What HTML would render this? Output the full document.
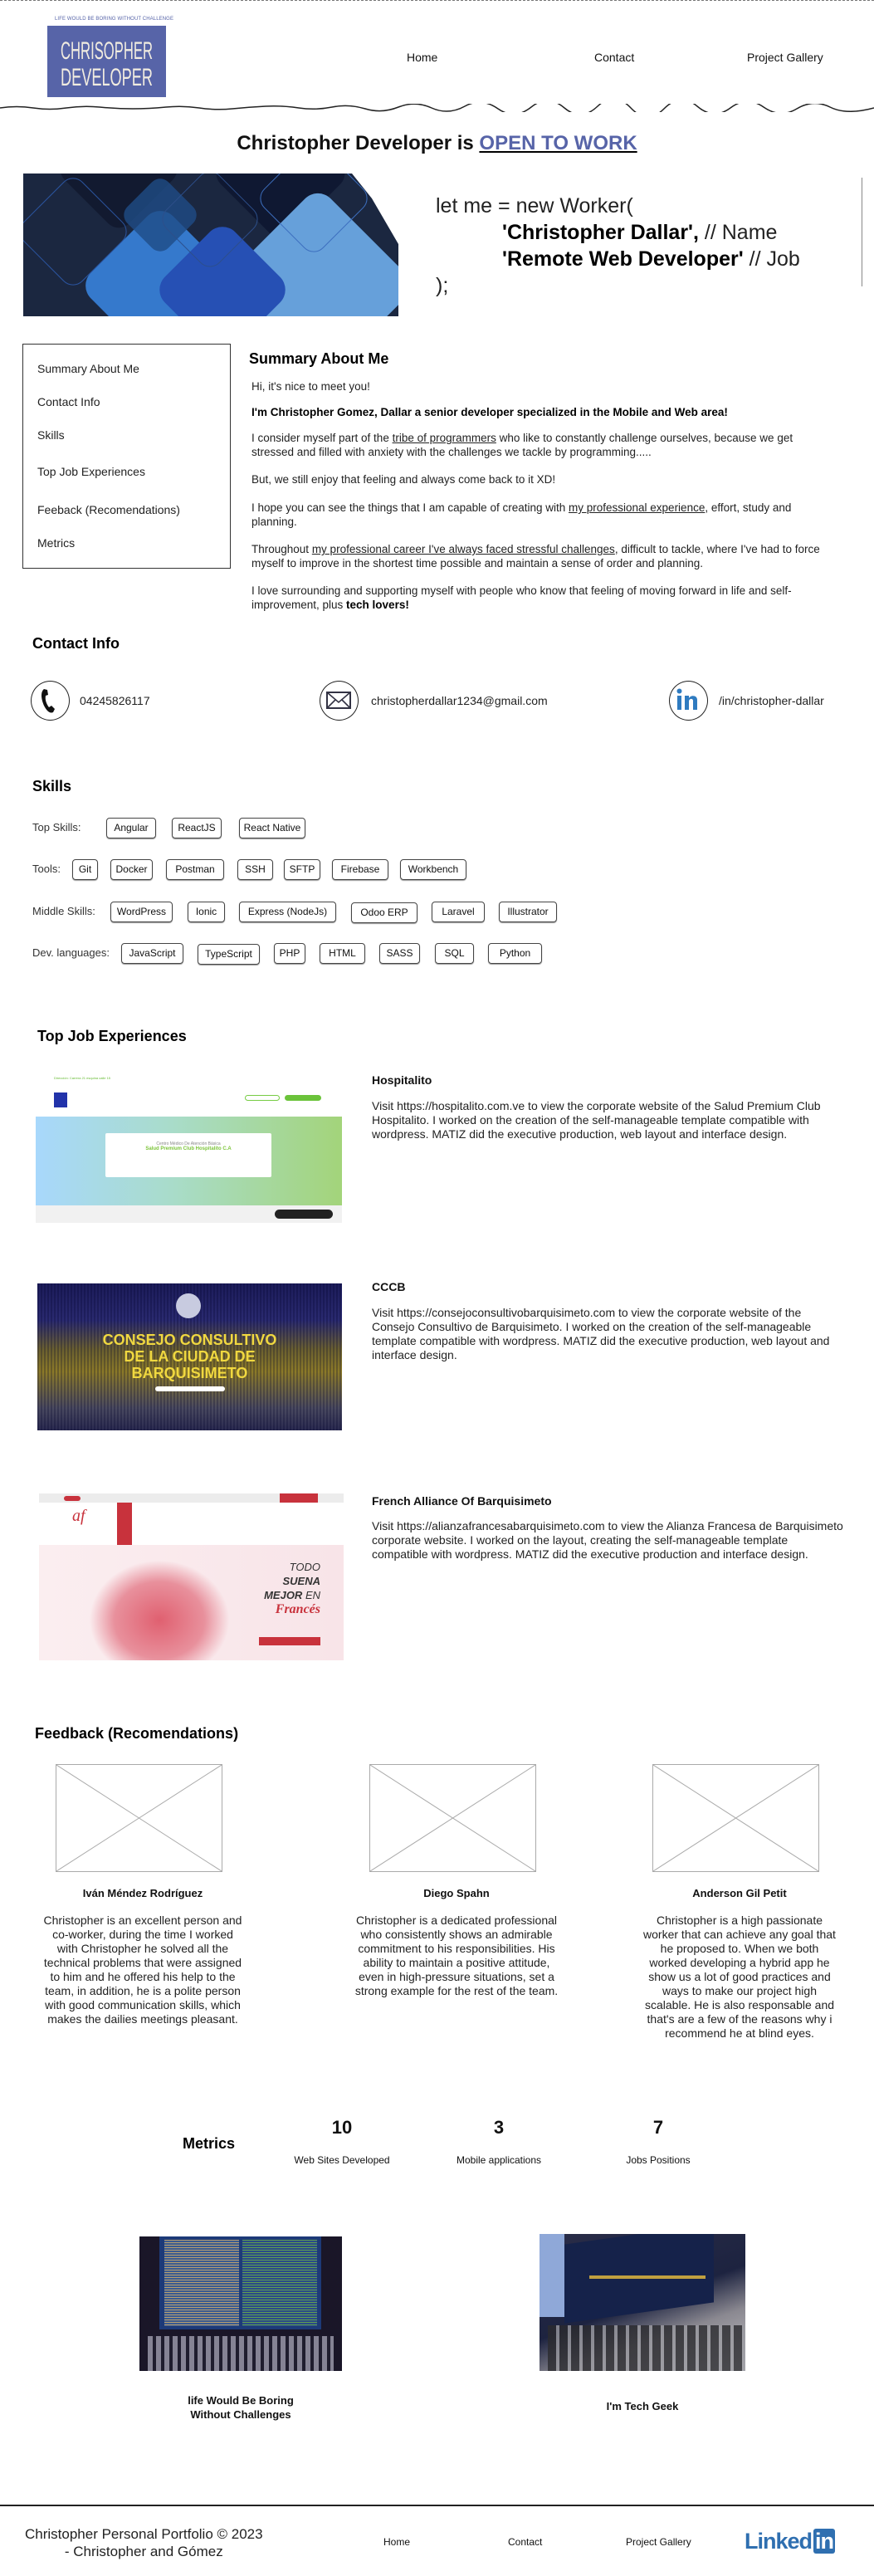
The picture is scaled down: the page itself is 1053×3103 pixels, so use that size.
<!DOCTYPE html>
<html><head><meta charset="utf-8">
<style>
*{margin:0;padding:0;box-sizing:border-box}
body{width:1053px;height:3103px;position:relative;background:#fff;font-family:"Liberation Sans",Arial,sans-serif;color:#111;overflow:hidden}
.a{position:absolute}
.nav{font-size:14px;color:#111}
h2{position:absolute;font-size:18px;font-weight:bold;color:#000}
.p{font-size:13.5px;line-height:17px;color:#222}
.chip{position:absolute;height:25px;border:1.5px solid #444;border-radius:4px;font-size:12px;line-height:22px;text-align:center;box-shadow:0 1px 1px #999;color:#111}
.lab{position:absolute;font-size:13px;color:#333}
.side{position:absolute;left:45px;font-size:14px;color:#222}
.icon{position:absolute;width:47px;height:48px;border:1.5px solid #222;border-radius:50%;top:820px}
.ctext{position:absolute;top:836px;font-size:14px;color:#222}
.jt{position:absolute;left:448px;font-size:14px;font-weight:bold}
.jp{position:absolute;left:448px;width:570px;font-size:14px;line-height:17px;color:#222}
.fb{position:absolute;width:201px;height:130px;border:1.5px solid #aaa;top:2125px}
.fn{position:absolute;width:260px;text-align:center;font-size:13px;font-weight:bold;top:2273px}
.ft{position:absolute;width:246px;text-align:center;font-size:14px;line-height:17px;top:2305px;color:#222}
.u{text-decoration:underline}
</style></head><body>
<div class="a" style="left:0;top:0;width:1053px;height:1px;border-top:1px dashed #777"></div>

<div class="a" style="left:66px;top:20px;font-size:6px;color:#5764a8;letter-spacing:0.1px">LIFE WOULD BE BORING WITHOUT CHALLENGE</div>
<svg class="a" style="left:57px;top:31px" width="143" height="86"><rect width="143" height="86" fill="#5764a8"/>
<text x="16" y="40" font-family="Liberation Sans, sans-serif" font-size="30" fill="#f1ece0" textLength="111" lengthAdjust="spacingAndGlyphs">CHRISOPHER</text>
<text x="16" y="72" font-family="Liberation Sans, sans-serif" font-size="30" fill="#f1ece0" textLength="111" lengthAdjust="spacingAndGlyphs">DEVELOPER</text></svg>
<div class="a nav" style="left:490px;top:61px">Home</div>
<div class="a nav" style="left:716px;top:61px">Contact</div>
<div class="a nav" style="left:900px;top:61px">Project Gallery</div>
<svg class="a" style="left:0;top:125px" width="1053" height="10"><path d="M0 5 Q20 2 40 5 T80 5 T120 4 T160 6 T200 4 T240 5 T280 6 T320 3 T360 5 T400 4 T440 6 T480 4 T520 5 T560 3 T600 6 T640 4 T680 5 T720 3 T760 5 T800 6 T840 3 T880 5 T920 4 T960 6 T1000 4 T1053 5" stroke="#222" stroke-width="1.5" fill="none"/></svg>

<div class="a" style="left:0;width:1053px;top:159px;text-align:center;font-size:24px;font-weight:bold">Christopher Developer is <span style="color:#5764a8;text-decoration:underline;text-decoration-color:#000">OPEN TO WORK</span></div>

<svg class="a" style="left:28px;top:209px" width="452" height="172" viewBox="0 0 452 172">
<defs><clipPath id="c"><rect width="452" height="172"/></clipPath></defs>
<g clip-path="url(#c)">
<rect width="452" height="172" fill="#1b2740"/>
<rect x="60" y="-60" width="110" height="110" rx="18" fill="#121a30" transform="rotate(45 115 -5)"/>
<rect x="250" y="-60" width="120" height="120" rx="18" fill="#0f1832" transform="rotate(45 310 0)"/>
<rect x="95" y="65" width="140" height="140" rx="22" fill="#3579cc" transform="rotate(45 165 135)"/>
<rect x="270" y="50" width="170" height="170" rx="22" fill="#66a0da" transform="rotate(45 355 135)"/>
<rect x="180" y="80" width="120" height="120" rx="22" fill="#2650b4" transform="rotate(45 240 140)"/>
<rect x="130" y="15" width="70" height="70" rx="14" fill="#1f4c86" opacity="0.8" transform="rotate(45 165 50)"/>
<polygon points="396,0 452,0 452,85 420,30" fill="#fff"/>
<rect x="10" y="20" width="100" height="100" rx="16" fill="none" stroke="#2b55a0" stroke-width="1" transform="rotate(45 60 70)"/>
<rect x="300" y="-20" width="100" height="100" rx="16" fill="none" stroke="#3d6fbf" stroke-width="1" transform="rotate(45 350 30)"/>
<rect x="180" y="10" width="90" height="90" rx="16" fill="none" stroke="#2d4f8a" stroke-width="1" transform="rotate(45 225 55)"/>
</g></svg>
<div class="a" style="left:525px;top:232px;font-size:25px;line-height:32px;color:#222">let me = new Worker(<br>
<span style="padding-left:80px;font-weight:bold;color:#000">'Christopher Dallar',</span> // Name<br>
<span style="padding-left:80px;font-weight:bold;color:#000">'Remote Web Developer'</span> // Job<br>);</div>
<div class="a" style="left:1038px;top:214px;width:1px;height:131px;background:#888"></div>

<div class="a" style="left:27px;top:414px;width:251px;height:271px;border:1.5px solid #333"></div>
<div class="side" style="top:436px">Summary About Me</div>
<div class="side" style="top:476px">Contact Info</div>
<div class="side" style="top:516px">Skills</div>
<div class="side" style="top:560px">Top Job Experiences</div>
<div class="side" style="top:606px">Feeback (Recomendations)</div>
<div class="side" style="top:646px">Metrics</div>

<h2 style="left:300px;top:422px">Summary About Me</h2>
<div class="a p" style="left:303px;top:457px;width:700px">Hi, it's nice to meet you!</div>
<div class="a p" style="left:303px;top:488px;width:720px;font-weight:bold;color:#000">I'm Christopher Gomez, Dallar a senior developer specialized in the Mobile and Web area!</div>
<div class="a p" style="left:303px;top:519px;width:690px">I consider myself part of the <span class="u">tribe of programmers</span> who like to constantly challenge ourselves, because we get stressed and filled with anxiety with the challenges we tackle by programming.....</div>
<div class="a p" style="left:303px;top:569px;width:690px">But, we still enjoy that feeling and always come back to it XD!</div>
<div class="a p" style="left:303px;top:603px;width:690px">I hope you can see the things that I am capable of creating with <span class="u">my professional experience</span>, effort, study and planning.</div>
<div class="a p" style="left:303px;top:653px;width:690px">Throughout <span class="u">my professional career I've always faced stressful challenges</span>, difficult to tackle, where I've had to force myself to improve in the shortest time possible and maintain a sense of order and planning.</div>
<div class="a p" style="left:303px;top:703px;width:700px">I love surrounding and supporting myself with people who know that feeling of moving forward in life and self-improvement, plus <b style="color:#000">tech lovers!</b></div>

<h2 style="left:39px;top:765px">Contact Info</h2>
<div class="icon" style="left:37px"><svg width="44" height="45" viewBox="0 0 44 45"><path d="M15 9 C11 12 11 20 15 29 C18 35 22 39 26 37 L28 33 L24 29 L21 31 C18 27 16 22 17 17 L20 16 L19 10 Z" fill="#111"/></svg></div>
<div class="ctext" style="left:96px">04245826117</div>
<div class="icon" style="left:385px"><svg width="44" height="45" viewBox="0 0 44 45"><rect x="8" y="13" width="28" height="19" fill="none" stroke="#334" stroke-width="2"/><path d="M8 13 L22 25 L36 13 M8 32 L18 22 M36 32 L26 22" stroke="#334" stroke-width="1.6" fill="none"/></svg></div>
<div class="ctext" style="left:447px">christopherdallar1234@gmail.com</div>
<div class="icon" style="left:806px"><svg width="44" height="45" viewBox="0 0 44 45"><rect x="9" y="17" width="5" height="17" fill="#2f7bc0"/><circle cx="11.5" cy="11.5" r="3" fill="#2f7bc0"/><path d="M18 17 H23 V20 C25 16 33 16 33 22 V34 H28 V23 C28 20 23 20 23 24 V34 H18 Z" fill="#2f7bc0"/></svg></div>
<div class="ctext" style="left:866px">/in/christopher-dallar</div>

<h2 style="left:39px;top:937px">Skills</h2>
<div class="lab" style="left:39px;top:989px">Top Skills:</div>
<div class="chip" style="left:128px;top:985px;width:60px">Angular</div>
<div class="chip" style="left:207px;top:985px;width:60px">ReactJS</div>
<div class="chip" style="left:288px;top:985px;width:80px">React Native</div>
<div class="lab" style="left:39px;top:1039px">Tools:</div>
<div class="chip" style="left:87px;top:1035px;width:31px">Git</div>
<div class="chip" style="left:133px;top:1035px;width:51px">Docker</div>
<div class="chip" style="left:200px;top:1035px;width:70px">Postman</div>
<div class="chip" style="left:286px;top:1035px;width:43px">SSH</div>
<div class="chip" style="left:342px;top:1035px;width:44px">SFTP</div>
<div class="chip" style="left:400px;top:1035px;width:68px">Firebase</div>
<div class="chip" style="left:482px;top:1035px;width:80px">Workbench</div>
<div class="lab" style="left:39px;top:1090px">Middle Skills:</div>
<div class="chip" style="left:133px;top:1086px;width:75px">WordPress</div>
<div class="chip" style="left:226px;top:1086px;width:45px">Ionic</div>
<div class="chip" style="left:288px;top:1086px;width:117px">Express (NodeJs)</div>
<div class="chip" style="left:423px;top:1087px;width:80px">Odoo ERP</div>
<div class="chip" style="left:520px;top:1086px;width:64px">Laravel</div>
<div class="chip" style="left:601px;top:1086px;width:70px">Illustrator</div>
<div class="lab" style="left:39px;top:1140px">Dev. languages:</div>
<div class="chip" style="left:146px;top:1136px;width:75px">JavaScript</div>
<div class="chip" style="left:238px;top:1137px;width:75px">TypeScript</div>
<div class="chip" style="left:330px;top:1136px;width:38px">PHP</div>
<div class="chip" style="left:385px;top:1136px;width:55px">HTML</div>
<div class="chip" style="left:457px;top:1136px;width:49px">SASS</div>
<div class="chip" style="left:524px;top:1136px;width:47px">SQL</div>
<div class="chip" style="left:588px;top:1136px;width:65px">Python</div>

<h2 style="left:45px;top:1238px">Top Job Experiences</h2>

<div class="a" style="left:43px;top:1292px;width:369px;height:181px;background:#fff;overflow:hidden">
<div class="a" style="left:22px;top:4px;font-size:4px;color:#6b3">Dirección: Carrera 21 esquina calle 15</div>
<div class="a" style="left:22px;top:24px;width:16px;height:18px;background:#2233aa"></div>
<div class="a" style="left:252px;top:27px;width:42px;height:7px;border-radius:4px;border:1px solid #7c4"></div>
<div class="a" style="left:300px;top:27px;width:44px;height:7px;border-radius:4px;background:#6bc33a"></div>
<div class="a" style="left:0;top:53px;width:369px;height:107px;background:linear-gradient(90deg,#a8d8fc,#a9dcc9 45%,#a3d47a)"></div>
<div class="a" style="left:84px;top:73px;height:53px;background:#fff;border-radius:2px;width:200px;text-align:center;font-size:5px;color:#888;padding-top:10px">Centro Médico De Atención Básica<br><b style="color:#7cc43a;font-size:6px">Salud Premium Club Hospitalito C.A</b></div>
<div class="a" style="left:0;top:160px;width:369px;height:21px;background:#f1f1f1"></div>
<div class="a" style="left:288px;top:165px;width:70px;height:11px;border-radius:6px;background:#222"></div>
</div>
<div class="jt" style="top:1293px">Hospitalito</div>
<div class="jp" style="top:1324px">Visit https://hospitalito.com.ve to view the corporate website of the Salud Premium Club Hospitalito. I worked on the creation of the self-manageable template compatible with wordpress. MATIZ did the executive production, web layout and interface design.</div>

<div class="a" style="left:45px;top:1546px;width:367px;height:177px;overflow:hidden;background:linear-gradient(180deg,#1c1c5a 0%,#2a2a70 25%,#6b6030 45%,#8c7a28 60%,#4a4a60 85%,#2a2a50 100%)">
<div class="a" style="left:0;top:0;width:367px;height:177px;background:repeating-linear-gradient(90deg,rgba(0,0,40,0.25) 0 2px,transparent 2px 4px)"></div>
<div class="a" style="left:167px;top:12px;width:30px;height:30px;border-radius:50%;background:#c8cbe0"></div>
<div class="a" style="left:0;top:58px;width:367px;text-align:center;font-size:18px;line-height:20px;font-weight:bold;color:#f0d840">CONSEJO CONSULTIVO<br>DE LA CIUDAD DE<br>BARQUISIMETO</div>
<div class="a" style="left:142px;top:124px;width:84px;height:6px;border-radius:3px;background:#fff"></div>
</div>
<div class="jt" style="top:1542px">CCCB</div>
<div class="jp" style="top:1573px">Visit https://consejoconsultivobarquisimeto.com to view the corporate website of the Consejo Consultivo de Barquisimeto. I worked on the creation of the self-manageable template compatible with wordpress. MATIZ did the executive production, web layout and interface design.</div>

<div class="a" style="left:47px;top:1799px;width:367px;height:201px;overflow:hidden;background:#fff">
<div class="a" style="left:0;top:0;width:367px;height:11px;background:#ececec"></div>
<div class="a" style="left:290px;top:0;width:46px;height:11px;background:#c8323c"></div>
<div class="a" style="left:30px;top:3px;width:20px;height:6px;background:#c8323c;border-radius:3px"></div>
<div class="a" style="left:94px;top:11px;width:18px;height:51px;background:#c8323c"></div>
<div class="a" style="left:40px;top:16px;font-size:20px;font-style:italic;color:#c8323c;font-family:'Liberation Serif',serif">af</div>
<div class="a" style="left:0;top:62px;width:367px;height:139px;background:linear-gradient(90deg,#fbeef0,#f8e4e8)"></div>
<div class="a" style="left:60px;top:80px;width:170px;height:121px;background:radial-gradient(ellipse at 50% 60%,#e06070 0%,#e8909c 45%,rgba(248,228,232,0) 70%)"></div>
<div class="a" style="left:255px;top:80px;width:84px;text-align:right;font-size:13px;line-height:17px;color:#333;font-style:italic">TODO<br><b>SUENA</b><br><b>MEJOR</b> EN<br><span style="color:#c8323c;font-family:'Liberation Serif',serif;font-size:16px;font-weight:bold">Francés</span></div>
<div class="a" style="left:265px;top:173px;width:74px;height:10px;background:#c8323c"></div>
</div>
<div class="jt" style="top:1800px">French Alliance Of Barquisimeto</div>
<div class="jp" style="top:1830px">Visit https://alianzafrancesabarquisimeto.com to view the Alianza Francesa de Barquisimeto corporate website. I worked on the layout, creating the self-manageable template compatible with wordpress. MATIZ did the executive production and interface design.</div>

<h2 style="left:42px;top:2078px">Feedback (Recomendations)</h2>
<svg class="fb" style="left:67px" viewBox="0 0 201 130" preserveAspectRatio="none"><path d="M0 0 L201 130 M201 0 L0 130" stroke="#aaa" stroke-width="1"/></svg>
<svg class="fb" style="left:445px" viewBox="0 0 201 130" preserveAspectRatio="none"><path d="M0 0 L201 130 M201 0 L0 130" stroke="#aaa" stroke-width="1"/></svg>
<svg class="fb" style="left:786px" viewBox="0 0 201 130" preserveAspectRatio="none"><path d="M0 0 L201 130 M201 0 L0 130" stroke="#aaa" stroke-width="1"/></svg>
<div class="fn" style="left:42px">Iván Méndez Rodríguez</div>
<div class="fn" style="left:420px">Diego Spahn</div>
<div class="fn" style="left:761px">Anderson Gil Petit</div>
<div class="ft" style="left:49px">Christopher is an excellent person and co-worker, during the time I worked with Christopher he solved all the technical problems that were assigned to him and he offered his help to the team, in addition, he is a polite person with good communication skills, which makes the dailies meetings pleasant.</div>
<div class="ft" style="left:427px">Christopher is a dedicated professional who consistently shows an admirable commitment to his responsibilities. His ability to maintain a positive attitude, even in high-pressure situations, set a strong example for the rest of the team.</div>
<div class="ft" style="left:773px;width:236px">Christopher is a high passionate worker that can achieve any goal that he proposed to. When we both worked developing a hybrid app he show us a lot of good practices and ways to make our project high scalable. He is also responsable and that's are a few of the reasons why i recommend he at blind eyes.</div>

<h2 style="left:220px;top:2572px">Metrics</h2>
<div class="a" style="left:362px;width:100px;top:2550px;text-align:center;font-size:22px;font-weight:bold">10</div>
<div class="a" style="left:551px;width:100px;top:2550px;text-align:center;font-size:22px;font-weight:bold">3</div>
<div class="a" style="left:743px;width:100px;top:2550px;text-align:center;font-size:22px;font-weight:bold">7</div>
<div class="a" style="left:332px;width:160px;top:2595px;text-align:center;font-size:12px">Web Sites Developed</div>
<div class="a" style="left:521px;width:160px;top:2595px;text-align:center;font-size:12px">Mobile applications</div>
<div class="a" style="left:713px;width:160px;top:2595px;text-align:center;font-size:12px">Jobs Positions</div>

<div class="a" style="left:168px;top:2694px;width:244px;height:162px;background:#1a1628;overflow:hidden">
<div class="a" style="left:24px;top:0;width:195px;height:112px;background:#1d3a78"></div>
<div class="a" style="left:30px;top:4px;width:90px;height:104px;background:repeating-linear-gradient(180deg,#b8a070 0 1px,#3a5a90 1px 3px)"></div>
<div class="a" style="left:124px;top:4px;width:90px;height:104px;background:repeating-linear-gradient(180deg,#60a050 0 1px,#2a4a88 1px 3px)"></div>
<div class="a" style="left:10px;top:120px;width:224px;height:42px;background:repeating-linear-gradient(90deg,#ccd 0 6px,#223 6px 10px);opacity:0.6"></div>
</div>
<div class="a" style="left:650px;top:2691px;width:248px;height:165px;background:linear-gradient(160deg,#2a2d48 0%,#1d2340 50%,#8a8890 70%,#c8c8cc 100%);overflow:hidden">
<div class="a" style="left:0;top:0;width:30px;height:100px;background:#8fa8d8"></div>
<div class="a" style="left:30px;top:0;width:180px;height:95px;background:#15224a;transform:skewY(-8deg)"></div>
<div class="a" style="left:60px;top:50px;width:140px;height:4px;background:#c0a040"></div>
<div class="a" style="left:10px;top:110px;width:240px;height:55px;background:repeating-linear-gradient(90deg,#2a2a2e 0 10px,#9a9aa0 10px 14px);opacity:0.8"></div>
</div>
<div class="a" style="left:190px;width:200px;top:2883px;text-align:center;font-size:13px;font-weight:bold;line-height:17px">life Would Be Boring<br>Without Challenges</div>
<div class="a" style="left:674px;width:200px;top:2891px;text-align:center;font-size:13px;font-weight:bold">I'm Tech Geek</div>

<div class="a" style="left:0;top:3017px;width:1053px;height:2px;background:#222"></div>
<div class="a" style="left:30px;top:3042px;font-size:17px;line-height:21px;text-align:center;color:#222">Christopher Personal Portfolio © 2023<br>- Christopher and Gómez</div>
<div class="a" style="left:462px;top:3055px;font-size:12px">Home</div>
<div class="a" style="left:612px;top:3055px;font-size:12px">Contact</div>
<div class="a" style="left:754px;top:3055px;font-size:12px">Project Gallery</div>
<div class="a" style="left:897px;top:3046px;font-size:27px;font-weight:bold;color:#2f6fb0;letter-spacing:-1px">Linked<span style="background:#2f6fb0;color:#fff;border-radius:3px;padding:0 2px;margin-left:2px">in</span></div>
</body></html>
